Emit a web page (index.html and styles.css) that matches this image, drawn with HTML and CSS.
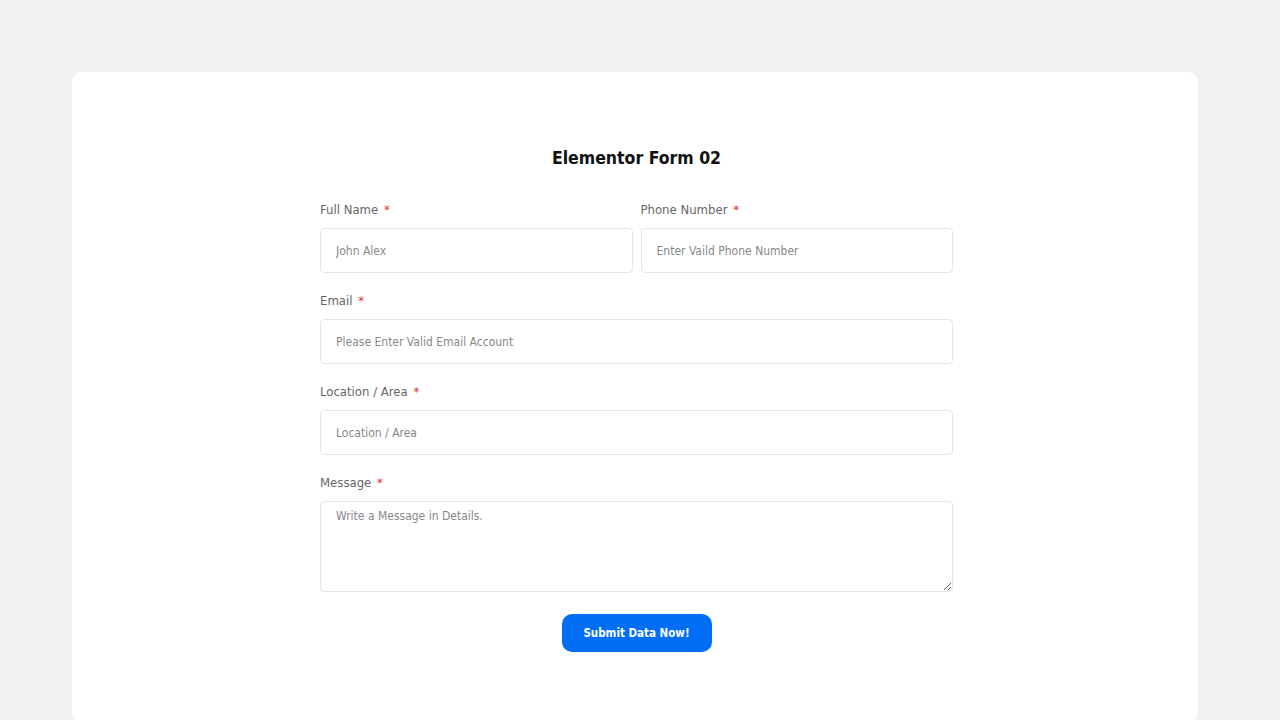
FILE: index.html
```html
<!DOCTYPE html>
<html lang="en">
<head>
    <meta charset="UTF-8">
    <meta name="viewport" content="width=device-width, initial-scale=1.0">
    <title>Elementor Form 02</title>
    <link rel="stylesheet" href="styles.css">
</head>
<body>
    <div class="card">
        <h2 class="form-title">Elementor Form 02</h2>
        <form class="form">
            <div class="field">
                <label>Full Name <span class="req">*</span></label>
                <input type="text" placeholder="John Alex">
            </div>
            <div class="field">
                <label>Phone Number <span class="req">*</span></label>
                <input type="text" placeholder="Enter Vaild Phone Number">
            </div>
            <div class="field full">
                <label>Email <span class="req">*</span></label>
                <input type="email" placeholder="Please Enter Valid Email Account">
            </div>
            <div class="field full">
                <label>Location / Area <span class="req">*</span></label>
                <input type="text" placeholder="Location / Area">
            </div>
            <div class="field full">
                <label>Message <span class="req">*</span></label>
                <textarea placeholder="Write a Message in Details."></textarea>
            </div>
            <div class="actions full">
                <button type="button" class="submit">Submit Data Now!</button>
            </div>
        </form>
    </div>
</body>
</html>
```

FILE: styles.css
```css
body {
    margin: 0;
    padding: 72px 82px 0 72px;
    background-color: #f2f2f2;
    font-family: "DejaVu Sans Condensed", "DejaVu Sans", sans-serif;
}
.card {
    background-color: #fff;
    border-radius: 10px;
    padding: 74px 0 70px 3px;
}
.form-title {
    margin: 0 0 31px;
    text-align: center;
    font-size: 17.5px;
    font-weight: bold;
    color: #111;
    line-height: 24px;
}
.form {
    width: 633px;
    margin: 0 auto;
    display: grid;
    grid-template-columns: 1fr 1fr;
    column-gap: 8px;
    row-gap: 19px;
}
.field {
    display: flex;
    flex-direction: column;
    gap: 9px;
}
.full {
    grid-column: 1 / -1;
}
.field label {
    font-size: 13px;
    line-height: 18px;
    color: #666;
}
.req {
    color: #e0312d;
    margin-left: 2px;
}
.field input,
.field textarea {
    box-sizing: border-box;
    width: 100%;
    border: 1px solid #e6e6e6;
    border-radius: 4px;
    padding: 0 15px;
    font-family: inherit;
    font-size: 12px;
    color: #333;
    outline: none;
}
.field input {
    height: 45px;
}
.field textarea {
    height: 91px;
    padding-top: 7px;
    resize: vertical;
}
.field input::placeholder,
.field textarea::placeholder {
    color: #888;
}
.actions {
    display: flex;
    justify-content: center;
    padding-top: 3px;
}
.submit {
    width: 150px;
    height: 38px;
    border: none;
    border-radius: 10px;
    background-color: #006ff5;
    color: #fff;
    font-family: inherit;
    font-size: 11.5px;
    font-weight: bold;
}
```
